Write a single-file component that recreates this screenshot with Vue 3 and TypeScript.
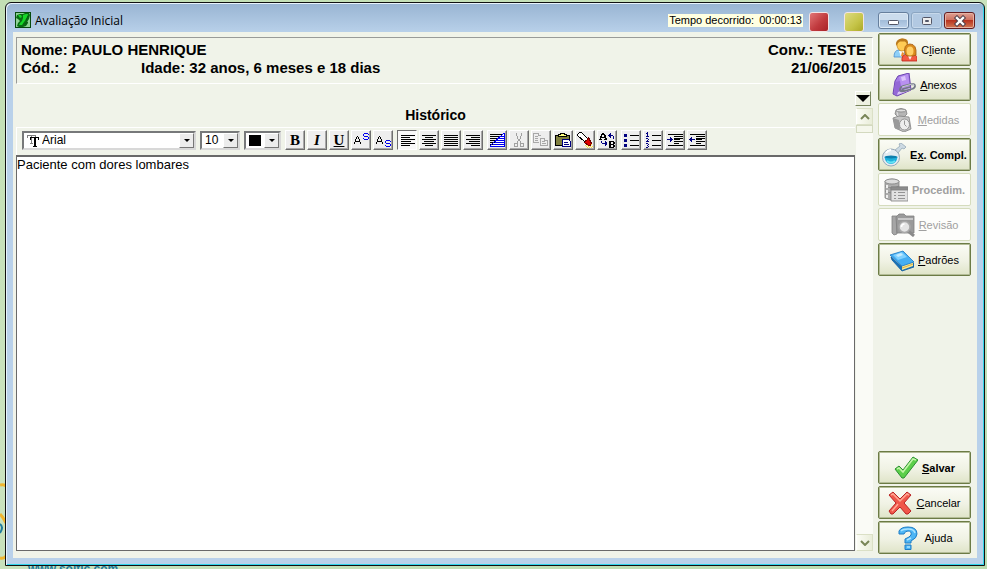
<script setup lang="ts">
import { ref } from 'vue'

interface Action {
  id: string
  before: string
  key: string
  after: string
  bold?: boolean
  disabled?: boolean
}

interface Tool {
  id: string
  label: string
  disabled?: boolean
}

const topActions: Action[] = [
  { id: 'cliente', before: 'C', key: 'l', after: 'iente' },
  { id: 'anexos', before: '', key: 'A', after: 'nexos' },
  { id: 'medidas', before: '', key: 'M', after: 'edidas', disabled: true },
  { id: 'exames', before: 'E', key: 'x', after: '. Compl.', bold: true },
  { id: 'procedim', before: 'Procedim.', key: '', after: '', bold: true, disabled: true },
  { id: 'revisao', before: '', key: 'R', after: 'evisão', disabled: true },
  { id: 'padroes', before: '', key: 'P', after: 'adrões' },
]
const bottomActions: Action[] = [
  { id: 'salvar', before: '', key: 'S', after: 'alvar', bold: true },
  { id: 'cancelar', before: '', key: 'C', after: 'ancelar' },
  { id: 'ajuda', before: 'A', key: 'j', after: 'uda' },
]
const actionGroups = [topActions, bottomActions]

const toolGroups: Tool[][] = [
  [
    { id: 'bold', label: 'Negrito' },
    { id: 'italic', label: 'Itálico' },
    { id: 'underline', label: 'Sublinhado' },
    { id: 'sup', label: 'Sobrescrito' },
    { id: 'sub', label: 'Subscrito' },
  ],
  [
    { id: 'left', label: 'Alinhar à esquerda' },
    { id: 'center', label: 'Centralizar' },
    { id: 'justify', label: 'Justificar' },
    { id: 'right', label: 'Alinhar à direita' },
  ],
  [
    { id: 'style', label: 'Cor de fundo' },
    { id: 'cut', label: 'Recortar', disabled: true },
    { id: 'copy', label: 'Copiar', disabled: true },
    { id: 'paste', label: 'Colar' },
    { id: 'find', label: 'Localizar' },
    { id: 'replace', label: 'Substituir' },
  ],
  [
    { id: 'bullets', label: 'Marcadores' },
    { id: 'numbers', label: 'Numeração' },
    { id: 'indent', label: 'Aumentar recuo' },
    { id: 'outdent', label: 'Diminuir recuo' },
  ],
]

const lines: Record<string, string> = {
  left: 'M3 4.5h14M3 6.5h9M3 8.5h14M3 10.5h10M3 12.5h14M3 14.5h9',
  center: 'M2 4.5h14M5 6.5h8M2 8.5h14M4 10.5h10M2 12.5h14M5 14.5h8',
  justify: 'M2 4.5h14M2 6.5h14M2 8.5h14M2 10.5h14M2 12.5h14M2 14.5h14',
  right: 'M2 4.5h14M7 6.5h9M2 8.5h14M5 10.5h11M2 12.5h14M7 14.5h9',
}

const align = ref('left')
const font = ref('Arial')
const size = ref('10')
const text = ref('Paciente com dores lombares')

function useTool(id: string) {
  if (id in lines) align.value = id
}
</script>

<template>
  <div class="desktop">
    <svg class="ring" viewBox="0 0 6 78" aria-hidden="true">
      <path d="M0 2Q4 1 6 3M0 31Q3 34 6 40M0 75Q4 76 6 73" fill="none" stroke="#f0b52e" stroke-width="3" />
      <path d="M0 41Q4 44 0 50" fill="none" stroke="#1d7b9e" stroke-width="2" />
    </svg>
    <span class="site">www.soltic.com</span>

    <div class="window">
      <header class="titlebar">
        <svg class="app-icon" viewBox="0 0 16 16" aria-hidden="true">
          <path d="M0 0h16v16H0z" fill="#064a0c" />
          <path d="M1 1h14v14H1z" fill="#8fd495" />
          <path d="M2 3l3-1h3l2-1h4l1 2-1 4-2 3 1 1-2 3-3 1H4l-2-1 1-3 2-2-2-2-2-1z" fill="#086c12" />
          <path d="M3 3h3l1 2-2 1zM8 3l3-1h2l-1 4-3 4-2 3H4l1-2 2-2 1-3z" fill="#16d628" />
          <path d="M10 12l3-2M13 4l-2 4" stroke="#075b0f" />
        </svg>
        <h1>Avaliação Inicial</h1>
        <output class="timer"><span>Tempo decorrido:</span><span>00:00:13</span></output>
        <button class="light red" aria-label="Parar"></button>
        <button class="light yellow" aria-label="Pausar"></button>
        <div class="controls">
          <button aria-label="Minimizar">
            <svg viewBox="0 0 14 12"><rect x="1.500" y="5.500" width="10" height="4" rx="1" fill="#fff" stroke="#535666" /></svg>
          </button>
          <button class="max" aria-label="Restaurar">
            <svg viewBox="0 0 14 12"><rect x="2.500" y="2.500" width="9" height="7" rx="1" fill="#eee" stroke="#535666" /><path d="M5.500 5.500h3v1h-3z" fill="#9db4d0" stroke="#535666" /></svg>
          </button>
          <button class="close" aria-label="Fechar">
            <svg viewBox="0 0 14 12"><path d="M4 3l6 6M10 3l-6 6" stroke="#51404a" stroke-width="4.400" stroke-linecap="square" /><path d="M4 3l6 6M10 3l-6 6" stroke="#fff" stroke-width="2.400" stroke-linecap="square" /></svg>
          </button>
        </div>
      </header>

      <div class="client">
        <main class="main">
          <section class="patient">
            <div class="row"><span>Nome: PAULO HENRIQUE</span><span>Conv.: TESTE</span></div>
            <div class="row">
              <span class="ids"><span class="code">Cód.:&nbsp; 2</span><span>Idade: 32 anos, 6 meses e 18 dias</span></span>
              <time datetime="2015-06-21">21/06/2015</time>
            </div>
          </section>

          <div class="work">
            <section class="record">
              <h2><label for="historico">Histórico</label></h2>
              <div class="toolbar" role="toolbar" aria-label="Formatação">
                <div class="combo font">
                  <svg class="tt" viewBox="0 0 12 12" aria-hidden="true" shape-rendering="crispEdges">
                    <path d="M0 0h9v3H8V1H5v7h1v1H3V8h1V1H1v2H0z" fill="#808080" />
                    <path d="M3 2h9v3h-1V3H9v8h1v1H6v-1h1V3H4v2H3z" />
                  </svg>
                  <select v-model="font" aria-label="Fonte"><option>Arial</option></select>
                  <i class="drop"></i>
                </div>
                <div class="combo size">
                  <select v-model="size" aria-label="Tamanho"><option>10</option></select>
                  <i class="drop"></i>
                </div>
                <button class="combo color" aria-label="Cor do texto"><i class="swatch"></i><i class="drop"></i></button>

                <div v-for="(group, g) in toolGroups" :key="g" class="group">
                  <button
                    v-for="tool in group"
                    :key="tool.id"
                    class="tool"
                    :class="{ pressed: tool.id === align }"
                    :aria-label="tool.label"
                    :disabled="tool.disabled"
                    @click="useTool(tool.id)"
                  >
                    <b v-if="tool.id === 'bold'" class="letter">B</b>
                    <b v-else-if="tool.id === 'italic'" class="letter"><em>I</em></b>
                    <b v-else-if="tool.id === 'underline'" class="letter"><u>U</u></b>
                    <svg v-else viewBox="0 0 18 18" shape-rendering="crispEdges" fill="none" stroke="#000">
                      <template v-if="tool.id === 'sup'">
                        <path d="M2.500 13V11M8.500 13V11M3.500 11V8M7.500 11V8M4.500 8V6M6.500 8V6M5 5.500h1M3 10.500h5" />
                        <path d="M12 2.500h4M11.500 3v2M12 5.500h4M16.500 6v2M12 8.500h4M16.500 3v1M11.500 7v1" stroke="#0000f0" />
                      </template>
                      <template v-else-if="tool.id === 'sub'">
                        <path d="M2.500 13V11M8.500 13V11M3.500 11V8M7.500 11V8M4.500 8V6M6.500 8V6M5 5.500h1M3 10.500h5" />
                        <path d="M12 9.500h4M11.500 10v2M12 12.500h4M16.500 13v2M12 15.500h4M16.500 10v1M11.500 14v1" stroke="#0000f0" />
                      </template>
                      <path v-else-if="lines[tool.id]" :d="lines[tool.id]" />
                      <template v-else-if="tool.id === 'style'">
                        <path d="M2 3.500h14M2 5.500h12M2 7.500h10M2 9.500h8M2 11.500h6M2 13.500h4" />
                        <path d="M2 16L17 2v14z" fill="#fff" stroke="none" />
                        <path d="M16.500 2v14M2 15.500h15M2 15L16 2M5 13.500h11M7 11.500h9M9 9.500h7M11 7.500h5M13 5.500h3" stroke="#0000f0" />
                      </template>
                      <g v-else-if="tool.id === 'cut'" stroke="#a0a0a0">
                        <path d="M6.500 2v3M7.500 5v3M11.500 2v3M10.500 5v3M8 8.500h2M8 9.500h2M7.500 10v2M10.500 10v2" />
                        <path d="M4.500 12.500h3v3h-3zM10.500 12.500h3v3h-3z" />
                      </g>
                      <g v-else-if="tool.id === 'copy'" stroke="#a8a8a8">
                        <path d="M7 11.500H1.500v-9H6v2h2.500M3 5.500h3M3 7.500h3M3 9.500h3M8.500 7.500h4v2h3v5h-7zM10 10.500h3M10 12.500h4" />
                      </g>
                      <template v-else-if="tool.id === 'paste'">
                        <path d="M1.500 4.500h14v10h-14z" fill="#808040" />
                        <path d="M4.500 5.500v-2h2v-1h4v1h2v2z" fill="#ffff80" />
                        <path d="M8.500 8.500h6l2 2v5h-8z" fill="#fff" stroke="#000080" />
                        <path d="M10 11.500h4M10 13.500h5" stroke="#000080" />
                      </template>
                      <template v-else-if="tool.id === 'find'">
                        <path d="M1.500 3.500l2-2h2l6 6-3 3-7-6z" fill="#fff" />
                        <path d="M8.500 11.500l4-5 3 6-1 2h-2z" fill="#e00000" stroke="#700000" />
                        <path d="M9 8.500h2" stroke="#fff" />
                        <path d="M10 15.500h7M11 16.500h6M9 14.500h3M15 13.500h2" stroke="#ffdf40" stroke-dasharray="1 1" />
                      </template>
                      <template v-else-if="tool.id === 'replace'">
                        <path d="M4 2.500h2M3 3.500h4M3 4.500h1M6 4.500h2M2 5.500h2M6 5.500h2M2 6.500h6M2 7.500h1M7 7.500h2M1 8.500h3M6 8.500h3" />
                        <path d="M11 10.500h5M11 11.500h2M15 11.500h2M11 12.500h2M15 12.500h2M11 13.500h5M11 14.500h2M15 14.500h2M11 15.500h2M15 15.500h2M11 16.500h5" />
                        <path d="M10 4.500h5M12.500 2v5M11.500 3v3M15.500 5v3M3.500 10v2M4 12.500h5M7.500 10v5M8.500 11v3" stroke="#000080" />
                      </template>
                      <template v-else-if="tool.id === 'bullets'">
                        <path d="M8 4.500h9M8 9.500h9M8 14.500h9" />
                        <path d="M2 3h3v3H2zM2 8h3v3H2zM2 13h3v3H2z" fill="#000080" stroke="none" />
                      </template>
                      <template v-else-if="tool.id === 'numbers'">
                        <path d="M8 4.500h9M8 9.500h9M8 14.500h9" />
                        <path d="M3.500 1v4M2 2.500h1M2 5.500h3M2 7.500h2M4.500 8v1M3 9.500h1M2 10.500h3M2 12.500h2M4.500 13v1M3 14.500h1M4.500 15v1M2 16.500h2" stroke="#000080" />
                      </template>
                      <template v-else>
                        <path d="M2 3.500h15M8 5.500h9M8 7.500h9M8 8.500h6M8 10.500h9M8 12.500h5M2 14.500h15" />
                        <path v-if="tool.id === 'indent'" d="M1 8.500h6M4.500 6v5M5.500 7v3" stroke="#000080" />
                        <path v-else d="M1 8.500h6M3.500 6v5M2.500 7v3" stroke="#000080" />
                      </template>
                    </svg>
                  </button>
                </div>
              </div>
              <textarea id="historico" v-model="text" spellcheck="false"></textarea>
            </section>

            <div class="side">
              <button class="fold" aria-label="Seções"><svg viewBox="0 0 14 8"><path d="M0 0h14L7 7z" /></svg></button>
              <div class="scroll">
                <button aria-label="Subir"><svg viewBox="0 0 10 6"><path d="M1 5l4-4 4 4" /></svg></button>
                <i class="thumb"></i>
                <button class="down" aria-label="Descer"><svg viewBox="0 0 10 6"><path d="M1 1l4 4 4-4" /></svg></button>
              </div>
            </div>
          </div>
        </main>

        <nav class="actions" aria-label="Ações">
          <div v-for="(group, g) in actionGroups" :key="g" class="stack">
            <button v-for="a in group" :key="a.id" class="action" :class="{ bold: a.bold }" :disabled="a.disabled">
              <svg class="glyph" viewBox="0 0 24 24" aria-hidden="true">
                <template v-if="a.id === 'cliente'">
                  <path d="M1 19q0-7 5-7l3 2 4-2q3 1 3 7z" fill="#8fd0f8" stroke="#4b90cf" stroke-width=".8" />
                  <path d="M6 13l2 6 4-6z" fill="#fff" /><path d="M9 14l2 1-1 4-2-1z" fill="#f08a2a" />
                  <ellipse cx="9" cy="7" rx="5" ry="6" fill="#ffcb54" stroke="#c98a22" stroke-width=".8" />
                  <path d="M3 8Q2 1 9 .500t6 6l-3-3H7L5 5z" fill="#bb7a1c" />
                  <path d="M9 23q-1-6 5-7h6q5 1 4 7z" fill="#f25a44" stroke="#c3211a" stroke-width=".8" />
                  <path d="M14 16l3 6 3-6z" fill="#ffe9e2" />
                  <path d="M12 16q-2-10 5-10t6 11l-3 1h-6z" fill="#d98a1c" stroke="#a35b10" stroke-width=".8" />
                  <ellipse cx="17" cy="13" rx="3.500" ry="4.500" fill="#ffcf66" />
                </template>
                <template v-else-if="a.id === 'anexos'">
                  <path d="M6 3L17 0l2 17L5 23 1 21 3 8z" fill="#a57be4" stroke="#6c45b0" />
                  <path d="M7 4l9-3 2 15-8 3z" fill="#b890f0" /><path d="M3 9l5-1 2 12-5 2-3-1z" fill="#9468d6" />
                  <path d="M9 4l4-1 1 4-4 1z" fill="#dcc4fb" /><path d="M5 22l14-5-1-2-12 4z" fill="#d9c3f6" />
                  <path d="M12 18q-3 1-4-1 0-3 3-4l9-2q3 0 3 2t-3 3l-8 2q-2 0-1-2l7-2" fill="none" stroke="#737985" stroke-width="1.800" />
                  <path d="M10 14l10-3q2 0 2 2" fill="none" stroke="#e9edf2" stroke-width=".7" />
                </template>
                <g v-else-if="a.id === 'medidas'" stroke="#808080" stroke-width=".8">
                  <path d="M6 2q5-3 10 0l1 4-3 3H8L5 6z" fill="#b5b5b5" /><ellipse cx="11" cy="2.500" rx="5" ry="1.500" fill="#e0e0e0" />
                  <path d="M3 10l6-2 10 1 2 12-7 3-9-4z" fill="#c6c6c6" />
                  <path d="M3 10l6 2 1 10-5-2z" fill="#9a9a9a" stroke="none" />
                  <ellipse cx="14.500" cy="16.500" rx="5" ry="5.500" fill="#eee" /><path d="M14.500 12.500v4l2 2" fill="none" />
                  <path d="M7 4l1 4" stroke="#eee" />
                </g>
                <template v-else-if="a.id === 'exames'">
                  <path d="M13 7l5-4-1-2 2-1 5 4-2 2-2-1-4 5z" fill="#cddae3" stroke="#94a8b8" stroke-width=".8" />
                  <circle cx="9" cy="14.500" r="8.500" fill="#e3ebf1" stroke="#97a9b9" />
                  <path d="M2.500 14h13q-1 7-6.500 7t-6.500-7z" fill="#1fb0dc" /><ellipse cx="9" cy="14" rx="6.500" ry="1.500" fill="#0d7fae" />
                  <path d="M5 18q4 3 8 0" fill="none" stroke="#66e3f5" stroke-width="2" /><path d="M4 10q2-3 5-3" fill="none" stroke="#fff" stroke-width="2" />
                </template>
                <g v-else-if="a.id === 'procedim'" stroke="#808080" stroke-width=".8">
                  <path d="M1 3q7-4 14 0v17q-7 4-14 0z" fill="#adadad" /><ellipse cx="8" cy="3.500" rx="7" ry="2.500" fill="#ddd" />
                  <path d="M1 8q7 4 14 0M1 13q7 4 14 0" fill="none" /><path d="M3 7v3M3 12v3M3 17v3" stroke="#eee" stroke-width="2" />
                  <path d="M7 9h17v14H7z" fill="#e2e2e2" /><path d="M7 9h17v3H7z" fill="#8c8c8c" />
                  <path d="M10 14.500h2M14 14.500h7M10 17.500h2M14 17.500h7M10 20.500h2M14 20.500h7" />
                </g>
                <g v-else-if="a.id === 'revisao'" stroke="#808080" stroke-width=".8">
                  <path d="M1 3h5v18l-3 1-2-2z" fill="#a5a5a5" /><path d="M5 4l3-3h5l2 2h8v17H6z" fill="#9a9a9a" />
                  <path d="M7 5h15v2H7z" fill="#c8c8c8" stroke="none" /><path d="M17 18l6 5" stroke-width="3" stroke="#8a8a8a" />
                  <circle cx="13.500" cy="14" r="5.500" fill="#e4e4e4" stroke="#a8a8a8" stroke-width="1.500" /><path d="M10.500 14q0-3 3-3" fill="none" stroke="#fff" stroke-width="1.500" />
                </g>
                <template v-else-if="a.id === 'padroes'">
                  <path d="M1 9l11 10 12-4v4l-12 4L2 12z" fill="#1673bb" stroke="#125c9c" stroke-width=".8" />
                  <path d="M12 18l11-4v4l-11 4z" fill="#ffe88a" /><path d="M12 20l11-4" stroke="#c49a35" stroke-width=".7" />
                  <path d="M0 7l13-4 11 11-12 4z" fill="#45aef2" stroke="#1878c5" stroke-width=".8" />
                  <path d="M3 7l9-3 5 5-9 3z" fill="#7fd1ff" /><path d="M6 7l5-2 2 2-5 2z" fill="#c5ecff" />
                </template>
                <template v-else-if="a.id === 'salvar'">
                  <path d="M1 13l4-3 4 4L19 1l5 3-14 18H8z" fill="#5ccf4a" stroke="#2b8f31" />
                  <path d="M3 13l2-1 4 4L19 3l3 1" fill="none" stroke="#c3f5a8" stroke-width="1.500" />
                </template>
                <template v-else-if="a.id === 'cancelar'">
                  <path d="M1 4l4-3 7 7 7-7 4 3-7 8 7 8-3 3h-2l-6-7-7 7H3l-2-3 7-8z" fill="#f0564a" stroke="#b92424" />
                  <path d="M3 4l2-1 7 7 7-7 2 1M4 20l6-7" fill="none" stroke="#ffa893" stroke-width="1.500" />
                </template>
                <template v-else>
                  <path d="M3 5q2-4 9-4 9 0 9 7 0 4-6 7v2H9v-4q5-2 6-4 1-4-3-4-3 0-4 3H3zM9 19h6v4.500H9z" fill="#4db6f5" stroke="#1c7cc6" />
                  <path d="M5 5q2-2 7-2 6 0 7 4M11 14l4-2M11 21h3" fill="none" stroke="#a9e3ff" stroke-width="1.500" />
                </template>
              </svg>
              <span>{{ a.before }}<u>{{ a.key }}</u>{{ a.after }}</span>
            </button>
          </div>
        </nav>
      </div>
    </div>
  </div>
</template>

<style>
body {
  overflow: hidden;
}
</style>

<style scoped>
* {
  box-sizing: border-box;
}
.desktop {
  position: relative;
  display: flex;
  min-height: 100vh;
  padding: 2px 2px 3px 5px;
  overflow: hidden;
  background: linear-gradient(160deg, #c2dfb4, #cbe3bf 50%, #badbae);
  font-family: "Liberation Sans", Arial, sans-serif;
  font-size: 11px;
  color: #000;
}
button {
  padding: 0;
  font: inherit;
  color: inherit;
}
svg {
  display: block;
}
.ring {
  position: absolute;
  left: 0;
  bottom: 8px;
  width: 6px;
  height: 78px;
}
.site {
  position: absolute;
  left: 28px;
  bottom: -7px;
  font-size: 12px;
  line-height: 14px;
  font-weight: bold;
  color: #1d7b9e;
}
.window {
  position: relative;
  flex: 1;
  display: flex;
  flex-direction: column;
  padding: 0 6px 7px;
  border: 1px solid #111;
  border-radius: 6px 6px 0 0;
  background: linear-gradient(#98b4d2, #b9d1ea 30px);
  box-shadow: inset 1px 1px #e8f3fc, inset -1px -1px #2fd5ea;
}
.titlebar {
  display: flex;
  align-items: flex-start;
  height: 29px;
  padding: 9px 3px 0 3px;
}
.app-icon {
  width: 16px;
  height: 16px;
}
h1 {
  flex: 1;
  margin: 0 0 0 4px;
  font: 12px/17px "Open Sans", sans-serif;
}
.timer {
  display: flex;
  gap: 5px;
  margin: 2px 6px 0 0;
  padding: 0 1px;
  line-height: 13px;
  background: #ffffe1;
}
.light {
  width: 20px;
  height: 20px;
  border: 1px solid #f3e4e4;
  border-radius: 3px;
}
.red {
  margin-right: 15px;
  background: linear-gradient(135deg, #e27575, #c13b3f 55%, #a92127);
}
.yellow {
  margin-right: 14px;
  background: linear-gradient(135deg, #dddb80, #c5c448 60%, #aba827);
}
.controls {
  display: flex;
  gap: 2px;
}
.controls button {
  display: grid;
  place-items: center;
  width: 31px;
  height: 17px;
  border: 1px solid #667f9d;
  border-radius: 3px;
  background: linear-gradient(#cbdced 48%, #a3bdd9 50%, #bbd1e9);
  box-shadow: inset 0 0 0 1px #dce9f5;
}
.controls .max {
  border-color: #8ba5c1;
  background: #b2c9e2;
  box-shadow: inset 0 0 0 1px #c7d9eb;
}
.controls .close {
  border-color: #641c20;
  background: linear-gradient(#dfa093, #ce705e 48%, #b83420 50%, #d37a55);
  box-shadow: inset 0 0 0 1px #e6b3a4;
}
.controls svg {
  width: 14px;
  height: 12px;
}
.client {
  flex: 1;
  display: flex;
  gap: 5px;
  margin: 0 1px 0 1px;
  padding: 1px 6px 4px 3px;
  background: #f0f3e9;
}
.main {
  flex: 1;
  display: flex;
  flex-direction: column;
  padding: 4px 0 3px;
}
.patient {
  height: 47px;
  padding: 3px 6px 0 4px;
  border: 1px solid;
  border-color: #999b98 #fff #fff #999b98;
  font-size: 15px;
  line-height: 18px;
  font-weight: bold;
}
.row {
  display: flex;
  justify-content: space-between;
}
.ids {
  display: flex;
}
.code {
  width: 120px;
}
.work {
  flex: 1;
  display: flex;
}
.record {
  flex: 1;
  display: flex;
  flex-direction: column;
}
h2 {
  height: 43px;
  margin: 0;
  padding-top: 22px;
  font-size: 14px;
  line-height: 18px;
  text-align: center;
}
.toolbar {
  display: flex;
  gap: 4px;
  height: 28px;
  padding: 2px 0 0 5px;
  border: 1px solid #fff;
  border-width: 1px 0 0 1px;
}
.combo {
  display: flex;
  align-items: center;
  height: 19px;
  margin-top: 1px;
  padding: 0;
  border: 2px solid;
  border-color: #77797a #d8d8d8 #d8d8d8 #77797a;
  background: #fff;
}
.font {
  width: 174px;
}
.size {
  width: 40px;
}
.color {
  width: 37px;
}
.tt {
  width: 12px;
  height: 12px;
  margin-left: 3px;
}
select {
  flex: 1;
  min-width: 0;
  height: 15px;
  padding: 0 0 0 3px;
  border: 0;
  appearance: none;
  background: transparent;
  font: 12px/15px "Liberation Sans", Arial, sans-serif;
  color: #000;
}
.drop {
  display: grid;
  place-items: center;
  width: 15px;
  height: 15px;
  border: 1px solid;
  border-color: #fff #777 #777 #fff;
  background: #ececec;
}
.drop::after {
  content: "";
  border: 3px solid transparent;
  border-top-color: #000;
  border-bottom: 0;
}
.swatch {
  width: 12px;
  height: 11px;
  margin: 0 auto 0 3px;
  background: #000;
}
.group {
  display: flex;
  gap: 2px;
}
.tool {
  display: grid;
  place-items: center;
  width: 20px;
  height: 20px;
  border: 1px solid;
  border-color: #fff #6f6f6f #6f6f6f #fff;
  background: #eee;
  box-shadow: inset -1px -1px #a8a8a8;
}
.tool svg {
  width: 18px;
  height: 18px;
}
.pressed {
  border-color: #6f6f6f #fff #fff #6f6f6f;
  background: #f8f8f8;
  box-shadow: none;
}
.letter {
  font: bold 15px/17px "Liberation Serif", serif;
}
textarea {
  flex: 1;
  display: block;
  width: 100%;
  padding: 0;
  border: 1px solid #696969;
  border-top: 2px solid #696969;
  outline: 0;
  resize: none;
  overflow: hidden;
  background: #fff;
  font: 13px/16px "Liberation Sans", Arial, sans-serif;
  color: #000;
}
.side {
  display: flex;
  flex-direction: column;
  width: 18px;
  padding-top: 7px;
}
.fold {
  display: grid;
  place-items: center;
  width: 16px;
  height: 15px;
  border: 1px solid;
  border-color: #fff #78855e #78855e #fff;
  background: #eef1e2;
}
.fold svg {
  width: 14px;
  height: 8px;
}
.scroll {
  flex: 1;
  display: flex;
  flex-direction: column;
  margin: 2px 0 0 1px;
  background: #fafbf6;
}
.scroll button {
  display: grid;
  place-items: center;
  height: 17px;
  border: 1px solid #dbe0c6;
  border-left-color: #fff;
  background: linear-gradient(90deg, #fbfcf5, #e9edd9);
}
.scroll svg {
  width: 10px;
  height: 6px;
  fill: none;
  stroke: #788557;
  stroke-width: 2;
}
.thumb {
  height: 8px;
  border: 1px solid #d3d9bf;
  background: #f5f7ec;
}
.scroll .down {
  margin-top: auto;
}
.actions {
  display: flex;
  flex-direction: column;
  justify-content: space-between;
  width: 93px;
}
.stack {
  display: flex;
  flex-direction: column;
  gap: 2px;
}
.action {
  display: flex;
  align-items: center;
  justify-content: center;
  gap: 4px;
  height: 33px;
  border: 1px solid #6c7b45;
  border-radius: 2px;
  background: linear-gradient(#fbfcf6, #f0f2e4 55%, #dfe4c8);
  box-shadow: inset 0 0 0 1px #b3bc97;
  white-space: nowrap;
}
.action:disabled {
  border-color: #d5dcbd;
  background: #fdfdfb;
  box-shadow: none;
  color: #a0a0a0;
}
.bold {
  font-weight: bold;
}
.glyph {
  flex: none;
  width: 24px;
  height: 24px;
}
</style>
